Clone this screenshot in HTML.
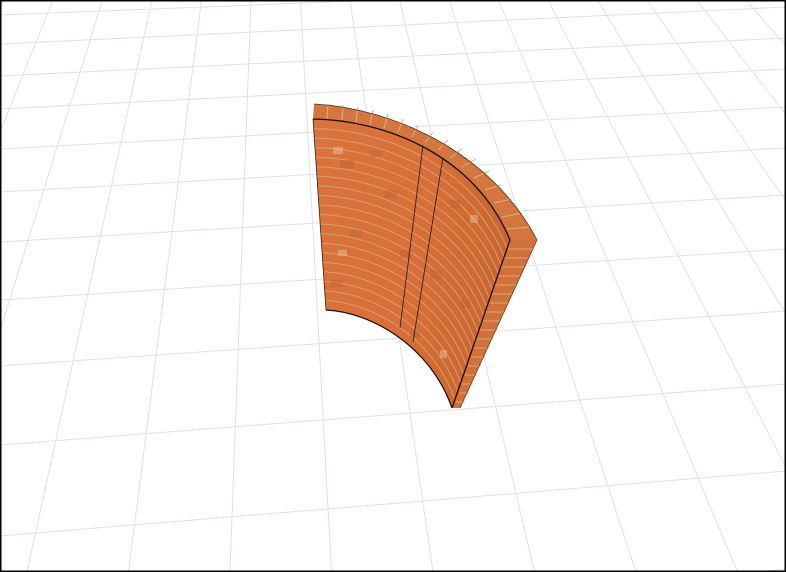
<!DOCTYPE html>
<html><head><meta charset="utf-8"><style>
html,body{margin:0;padding:0;background:#fff;width:786px;height:572px;overflow:hidden;}
svg{display:block;}
</style></head><body>
<svg width="786" height="572" viewBox="0 0 786 572" xmlns="http://www.w3.org/2000/svg">
<rect width="786" height="572" fill="#fff"/>
<defs>
<linearGradient id="fg" x1="0" y1="0" x2="1" y2="0.3">
<stop offset="0" stop-color="#d9743c"/><stop offset="0.6" stop-color="#d86f38"/><stop offset="1" stop-color="#c9662f"/>
</linearGradient>
</defs>
<g stroke="#e0dff0" stroke-width="1" fill="none">
<line x1="0" y1="15" x2="786" y2="-16"/>
<line x1="0" y1="44" x2="786" y2="7"/>
<line x1="0" y1="76" x2="786" y2="38"/>
<line x1="0" y1="109" x2="786" y2="69"/>
<line x1="0" y1="149" x2="786" y2="107"/>
<line x1="0" y1="192" x2="786" y2="148"/>
<line x1="0" y1="242" x2="786" y2="195"/>
<line x1="0" y1="300" x2="786" y2="249"/>
<line x1="0" y1="366" x2="786" y2="311"/>
<line x1="0" y1="445" x2="786" y2="384"/>
<line x1="0" y1="536" x2="786" y2="471"/>
<line x1="0" y1="645" x2="786" y2="569"/>
<line x1="-46" y1="0" x2="-376" y2="572"/>
<line x1="3.5" y1="0" x2="-275" y2="572"/>
<line x1="53" y1="0" x2="-176" y2="572"/>
<line x1="102.5" y1="0" x2="-74.5" y2="572"/>
<line x1="152" y1="0" x2="27" y2="572"/>
<line x1="201.5" y1="0" x2="128.5" y2="572"/>
<line x1="251" y1="0" x2="230" y2="572"/>
<line x1="300.5" y1="0" x2="331.5" y2="572"/>
<line x1="350" y1="0" x2="433" y2="572"/>
<line x1="399.5" y1="0" x2="534.5" y2="572"/>
<line x1="449" y1="0" x2="636" y2="572"/>
<line x1="498.5" y1="0" x2="737.5" y2="572"/>
<line x1="548" y1="0" x2="839" y2="572"/>
<line x1="597.5" y1="0" x2="940.5" y2="572"/>
<line x1="647" y1="0" x2="1042" y2="572"/>
<line x1="696.5" y1="0" x2="1143.5" y2="572"/>
<line x1="746" y1="0" x2="1245" y2="572"/>
<line x1="795.5" y1="0" x2="1346.5" y2="572"/>
</g>
<path d="M313,119 C385,120 475,155 510,240 L452,408 C430,345 370,312 326,310 Z" fill="url(#fg)"/>
<g stroke="#dca57a" stroke-width="1" fill="none" opacity="0.85">
<path d="M313.65,128.55 C384.25,129.6 472.75,164.5 507.1,248.4"/>
<path d="M314.3,138.1 C383.5,139.2 470.5,174 504.2,256.8"/>
<path d="M314.95,147.65 C382.75,148.8 468.25,183.5 501.3,265.2"/>
<path d="M315.6,157.2 C382,158.4 466,193 498.4,273.6"/>
<path d="M316.25,166.75 C381.25,168 463.75,202.5 495.5,282"/>
<path d="M316.9,176.3 C380.5,177.6 461.5,212 492.6,290.4"/>
<path d="M317.55,185.85 C379.75,187.2 459.25,221.5 489.7,298.8"/>
<path d="M318.2,195.4 C379,196.8 457,231 486.8,307.2"/>
<path d="M318.85,204.95 C378.25,206.4 454.75,240.5 483.9,315.6"/>
<path d="M319.5,214.5 C377.5,216 452.5,250 481,324"/>
<path d="M320.15,224.05 C376.75,225.6 450.25,259.5 478.1,332.4"/>
<path d="M320.8,233.6 C376,235.2 448,269 475.2,340.8"/>
<path d="M321.45,243.15 C375.25,244.8 445.75,278.5 472.3,349.2"/>
<path d="M322.1,252.7 C374.5,254.4 443.5,288 469.4,357.6"/>
<path d="M322.75,262.25 C373.75,264 441.25,297.5 466.5,366"/>
<path d="M323.4,271.8 C373,273.6 439,307 463.6,374.4"/>
<path d="M324.05,281.35 C372.25,283.2 436.75,316.5 460.7,382.8"/>
<path d="M324.7,290.9 C371.5,292.8 434.5,326 457.8,391.2"/>
<path d="M325.35,300.45 C370.75,302.4 432.25,335.5 454.9,399.6"/>
</g>
<g fill="#b9603a" opacity="0.4">
<rect x="340" y="160" width="14" height="8"/><rect x="385" y="190" width="12" height="8"/>
<rect x="430" y="270" width="12" height="9"/><rect x="460" y="300" width="10" height="8"/>
<rect x="350" y="230" width="12" height="7"/><rect x="410" y="330" width="10" height="8"/>
<rect x="370" y="150" width="12" height="7"/><rect x="400" y="250" width="11" height="8"/>
<rect x="330" y="280" width="12" height="7"/><rect x="450" y="200" width="10" height="8"/>
</g>
<g fill="#e8c09a" opacity="0.5">
<rect x="333" y="147" width="10" height="7"/><rect x="470" y="215" width="8" height="8"/>
<rect x="338" y="250" width="9" height="6"/><rect x="440" y="350" width="7" height="8"/>
</g>
<path d="M423,145 L400,328" stroke="#3a2012" stroke-width="0.9" fill="none"/>
<path d="M443,157 L413,342" stroke="#3a2012" stroke-width="0.9" fill="none"/>
<path d="M314,104 C390,108 490,150 537,240 L510,240 C475,155 385,120 313,119 Z" fill="#d4773f"/>
<g stroke="#dcae86" stroke-width="1">
<line x1="328" y1="104" x2="327" y2="119"/><line x1="343" y1="105" x2="342" y2="120"/>
<line x1="358" y1="107" x2="356" y2="122"/><line x1="373" y1="110" x2="370" y2="125"/>
<line x1="388" y1="114" x2="384" y2="128"/><line x1="403" y1="119" x2="398" y2="132"/>
<line x1="418" y1="125" x2="412" y2="137"/><line x1="433" y1="132" x2="425" y2="143"/>
<line x1="448" y1="140" x2="438" y2="150"/><line x1="462" y1="149" x2="450" y2="158"/>
<line x1="476" y1="159" x2="462" y2="167"/><line x1="489" y1="171" x2="474" y2="178"/>
<line x1="501" y1="185" x2="485" y2="190"/><line x1="512" y1="199" x2="494" y2="203"/>
<line x1="522" y1="213" x2="502" y2="217"/><line x1="531" y1="227" x2="507" y2="229"/>
</g>
<path d="M314,104 C390,108 490,150 537,240" stroke="#5a3018" stroke-width="0.8" fill="none"/>
<path d="M313,119 C385,120 475,155 510,240" stroke="#1a0e08" stroke-width="1.3" fill="none"/>
<path d="M510,240 L537,240 L460,408 L452,408 Z" fill="#d2703a"/>
<g stroke="#dca57a" stroke-width="1">
<line x1="507" y1="249" x2="533" y2="249"/><line x1="504" y1="258" x2="529" y2="258"/>
<line x1="501" y1="267" x2="525" y2="267"/><line x1="498" y1="276" x2="521" y2="276"/>
<line x1="495" y1="285" x2="517" y2="285"/><line x1="492" y1="294" x2="513" y2="294"/>
<line x1="489" y1="303" x2="509" y2="303"/><line x1="486" y1="312" x2="505" y2="312"/>
<line x1="483" y1="321" x2="501" y2="321"/><line x1="480" y1="330" x2="497" y2="330"/>
<line x1="477" y1="339" x2="493" y2="339"/><line x1="474" y1="348" x2="489" y2="348"/>
<line x1="471" y1="357" x2="485" y2="357"/><line x1="468" y1="366" x2="481" y2="366"/>
<line x1="465" y1="375" x2="477" y2="375"/><line x1="462" y1="384" x2="473" y2="384"/>
<line x1="459" y1="393" x2="469" y2="393"/><line x1="456" y1="402" x2="465" y2="402"/>
</g>
<path d="M510,240 L452,408" stroke="#1a0e08" stroke-width="1.3" fill="none"/>
<path d="M537,240 L460,408" stroke="#5a3018" stroke-width="0.7" fill="none"/>
<path d="M326,310 C370,312 430,345 452,408" stroke="#1a0e08" stroke-width="1.2" fill="none"/>
<path d="M313,119 L326,310" stroke="#3a2012" stroke-width="0.8" fill="none"/>
<rect x="0.75" y="0.75" width="784.5" height="570.5" fill="none" stroke="#000" stroke-width="1.5"/>
</svg>
</body></html>
